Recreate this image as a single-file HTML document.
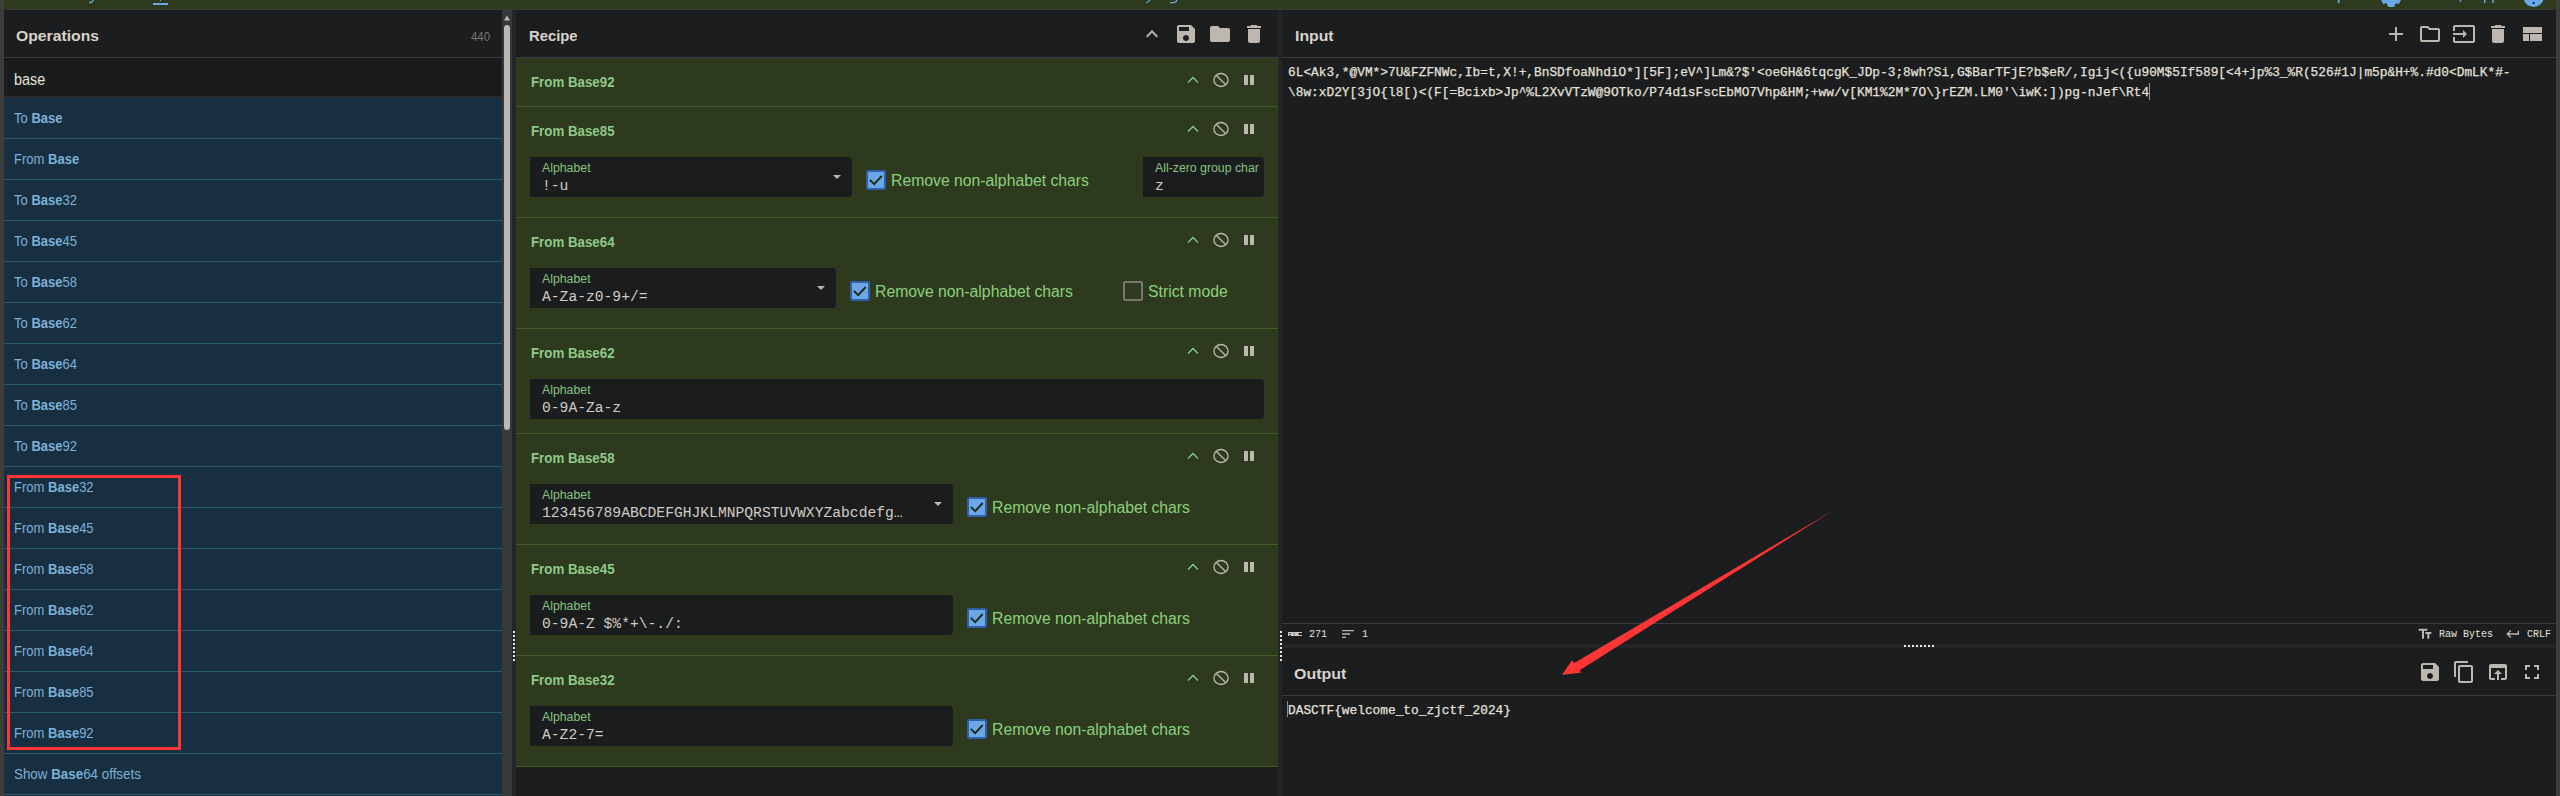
<!DOCTYPE html>
<html><head><meta charset="utf-8"><style>
html,body{margin:0;padding:0;width:2560px;height:796px;overflow:hidden;background:#1c1d1f;}
body>div{position:absolute;}
.t{white-space:pre;}
b{font-weight:bold;}
</style></head><body>
<div style="left:0px;top:0px;width:2560px;height:796px;background:#1c1d1f;"></div>
<div style="left:0px;top:0px;width:2560px;height:9px;background:#2e3a1d;"></div>
<div style="left:0px;top:9px;width:2560px;height:1px;background:#3a3d40;"></div>
<div style="left:0px;top:0px;width:4px;height:796px;background:#3d3d3d;"></div>
<div style="left:2556px;top:0px;width:4px;height:796px;background:#3d3d3d;"></div>
<div style="left:4px;top:10px;width:498px;height:47px;background:#1c1d1f;"></div>
<div style="left:4px;top:57px;width:498px;height:1px;background:#3a3d40;"></div>
<div style="left:4px;top:58px;width:498px;height:38px;background:#1a1b1d;"></div>
<div style="left:4px;top:96px;width:498px;height:2px;background:#26282a;"></div>
<div class="t" style="left:16px;top:28.13px;font-size:15.2px;line-height:15.2px;color:#d8d2ca;font-weight:bold;font-family:'Liberation Sans', sans-serif;transform:scaleX(1.035);transform-origin:0 0;">Operations</div>
<div class="t" style="left:471px;top:30.84px;font-size:12px;line-height:12px;color:#7a756e;font-weight:normal;font-family:'Liberation Sans', sans-serif;transform:scaleX(0.95);transform-origin:0 0;">440</div>
<div class="t" style="left:14px;top:72.46px;font-size:16px;line-height:16px;color:#e4e0da;font-weight:normal;font-family:'Liberation Sans', sans-serif;transform:scaleX(0.9);transform-origin:0 0;">base</div>
<div style="left:4px;top:98px;width:498px;height:698px;background:#182e41;"></div>
<div style="left:4px;top:138px;width:498px;height:1px;background:#2a5866;"></div>
<div class="t" style="left:14px;top:111.15px;font-size:14px;line-height:14px;color:#7cb1d8;font-weight:normal;font-family:'Liberation Sans', sans-serif;transform:scaleX(0.93);transform-origin:0 0;">To <b>Base</b></div>
<div style="left:4px;top:179px;width:498px;height:1px;background:#2a5866;"></div>
<div class="t" style="left:14px;top:152.15px;font-size:14px;line-height:14px;color:#7cb1d8;font-weight:normal;font-family:'Liberation Sans', sans-serif;transform:scaleX(0.93);transform-origin:0 0;">From <b>Base</b></div>
<div style="left:4px;top:220px;width:498px;height:1px;background:#2a5866;"></div>
<div class="t" style="left:14px;top:193.15px;font-size:14px;line-height:14px;color:#7cb1d8;font-weight:normal;font-family:'Liberation Sans', sans-serif;transform:scaleX(0.93);transform-origin:0 0;">To <b>Base</b>32</div>
<div style="left:4px;top:261px;width:498px;height:1px;background:#2a5866;"></div>
<div class="t" style="left:14px;top:234.15px;font-size:14px;line-height:14px;color:#7cb1d8;font-weight:normal;font-family:'Liberation Sans', sans-serif;transform:scaleX(0.93);transform-origin:0 0;">To <b>Base</b>45</div>
<div style="left:4px;top:302px;width:498px;height:1px;background:#2a5866;"></div>
<div class="t" style="left:14px;top:275.15px;font-size:14px;line-height:14px;color:#7cb1d8;font-weight:normal;font-family:'Liberation Sans', sans-serif;transform:scaleX(0.93);transform-origin:0 0;">To <b>Base</b>58</div>
<div style="left:4px;top:343px;width:498px;height:1px;background:#2a5866;"></div>
<div class="t" style="left:14px;top:316.15px;font-size:14px;line-height:14px;color:#7cb1d8;font-weight:normal;font-family:'Liberation Sans', sans-serif;transform:scaleX(0.93);transform-origin:0 0;">To <b>Base</b>62</div>
<div style="left:4px;top:384px;width:498px;height:1px;background:#2a5866;"></div>
<div class="t" style="left:14px;top:357.15px;font-size:14px;line-height:14px;color:#7cb1d8;font-weight:normal;font-family:'Liberation Sans', sans-serif;transform:scaleX(0.93);transform-origin:0 0;">To <b>Base</b>64</div>
<div style="left:4px;top:425px;width:498px;height:1px;background:#2a5866;"></div>
<div class="t" style="left:14px;top:398.15px;font-size:14px;line-height:14px;color:#7cb1d8;font-weight:normal;font-family:'Liberation Sans', sans-serif;transform:scaleX(0.93);transform-origin:0 0;">To <b>Base</b>85</div>
<div style="left:4px;top:466px;width:498px;height:1px;background:#2a5866;"></div>
<div class="t" style="left:14px;top:439.15px;font-size:14px;line-height:14px;color:#7cb1d8;font-weight:normal;font-family:'Liberation Sans', sans-serif;transform:scaleX(0.93);transform-origin:0 0;">To <b>Base</b>92</div>
<div style="left:4px;top:507px;width:498px;height:1px;background:#2a5866;"></div>
<div class="t" style="left:14px;top:480.15px;font-size:14px;line-height:14px;color:#7cb1d8;font-weight:normal;font-family:'Liberation Sans', sans-serif;transform:scaleX(0.93);transform-origin:0 0;">From <b>Base</b>32</div>
<div style="left:4px;top:548px;width:498px;height:1px;background:#2a5866;"></div>
<div class="t" style="left:14px;top:521.15px;font-size:14px;line-height:14px;color:#7cb1d8;font-weight:normal;font-family:'Liberation Sans', sans-serif;transform:scaleX(0.93);transform-origin:0 0;">From <b>Base</b>45</div>
<div style="left:4px;top:589px;width:498px;height:1px;background:#2a5866;"></div>
<div class="t" style="left:14px;top:562.15px;font-size:14px;line-height:14px;color:#7cb1d8;font-weight:normal;font-family:'Liberation Sans', sans-serif;transform:scaleX(0.93);transform-origin:0 0;">From <b>Base</b>58</div>
<div style="left:4px;top:630px;width:498px;height:1px;background:#2a5866;"></div>
<div class="t" style="left:14px;top:603.15px;font-size:14px;line-height:14px;color:#7cb1d8;font-weight:normal;font-family:'Liberation Sans', sans-serif;transform:scaleX(0.93);transform-origin:0 0;">From <b>Base</b>62</div>
<div style="left:4px;top:671px;width:498px;height:1px;background:#2a5866;"></div>
<div class="t" style="left:14px;top:644.15px;font-size:14px;line-height:14px;color:#7cb1d8;font-weight:normal;font-family:'Liberation Sans', sans-serif;transform:scaleX(0.93);transform-origin:0 0;">From <b>Base</b>64</div>
<div style="left:4px;top:712px;width:498px;height:1px;background:#2a5866;"></div>
<div class="t" style="left:14px;top:685.15px;font-size:14px;line-height:14px;color:#7cb1d8;font-weight:normal;font-family:'Liberation Sans', sans-serif;transform:scaleX(0.93);transform-origin:0 0;">From <b>Base</b>85</div>
<div style="left:4px;top:753px;width:498px;height:1px;background:#2a5866;"></div>
<div class="t" style="left:14px;top:726.15px;font-size:14px;line-height:14px;color:#7cb1d8;font-weight:normal;font-family:'Liberation Sans', sans-serif;transform:scaleX(0.93);transform-origin:0 0;">From <b>Base</b>92</div>
<div style="left:4px;top:794px;width:498px;height:1px;background:#2a5866;"></div>
<div class="t" style="left:14px;top:767.15px;font-size:14px;line-height:14px;color:#7cb1d8;font-weight:normal;font-family:'Liberation Sans', sans-serif;transform:scaleX(0.955);transform-origin:0 0;">Show <b>Base</b>64 offsets</div>
<div style="left:502px;top:10px;width:10px;height:786px;background:#36393c;"></div>
<svg style="position:absolute;left:502px;top:10px;" width="10" height="16" viewBox="0 0 10 16"><path fill="#bdb9b2" d="M2 10.5 L5 5.5 L8 10.5 Z"/></svg>
<div style="left:504px;top:25px;width:6px;height:405px;background:#bdb9b2;border-radius:3px"></div>
<div style="left:512px;top:10px;width:4px;height:786px;background:#232527;"></div>
<div style="left:7px;top:475px;width:168px;height:269px;border:3px solid #fd3535"></div>
<div style="left:516px;top:10px;width:762px;height:47px;background:#1c1d1f;"></div>
<div style="left:516px;top:57px;width:762px;height:1px;background:#3a3d40;"></div>
<div class="t" style="left:529px;top:28.13px;font-size:15.2px;line-height:15.2px;color:#d8d2ca;font-weight:bold;font-family:'Liberation Sans', sans-serif;transform:scaleX(0.975);transform-origin:0 0;">Recipe</div>
<svg style="position:absolute;left:1140px;top:21.5px;" width="24" height="24" viewBox="0 0 24 24"><path fill="#bdb7af" d="M7.41 15.41L12 10.83l4.59 4.58L18 14l-6-6-6 6z"/></svg>
<svg style="position:absolute;left:1174px;top:22px;" width="24" height="24" viewBox="0 0 24 24"><path fill="#bdb7af" d="M17 3H5c-1.11 0-2 .9-2 2v14c0 1.1.89 2 2 2h14c1.1 0 2-.9 2-2V7l-4-4zm-5 16c-1.66 0-3-1.34-3-3s1.34-3 3-3 3 1.34 3 3-1.34 3-3 3zm3-10H5V5h10v4z"/></svg>
<svg style="position:absolute;left:1208px;top:22px;" width="24" height="24" viewBox="0 0 24 24"><path fill="#bdb7af" d="M10 4H4c-1.1 0-1.99.9-1.99 2L2 18c0 1.1.9 2 2 2h16c1.1 0 2-.9 2-2V8c0-1.1-.9-2-2-2h-8l-2-2z"/></svg>
<svg style="position:absolute;left:1242px;top:22px;" width="24" height="24" viewBox="0 0 24 24"><path fill="#bdb7af" d="M6 19c0 1.1.9 2 2 2h8c1.1 0 2-.9 2-2V7H6v12zM19 4h-3.5l-1-1h-5l-1 1H5v2h14V4z"/></svg>
<div style="left:1278px;top:10px;width:4px;height:786px;background:#232527;"></div>
<div style="left:516px;top:58px;width:762px;height:49px;background:#2e3a1d;"></div>
<div style="left:516px;top:106px;width:762px;height:1px;background:#455b29;"></div>
<svg style="position:absolute;left:1186px;top:74.5px;" width="14" height="10" viewBox="0 0 14 10"><path fill="none" stroke="#86cc90" stroke-width="1.3" d="M2 7.5 L7 2.5 L12 7.5"/></svg>
<svg style="position:absolute;left:1212px;top:71px;" width="18" height="18" viewBox="0 0 18 18"><ellipse cx="9" cy="9" rx="7.1" ry="6.5" fill="none" stroke="#bdb7af" stroke-width="1.3"/><path d="M4.2 4.2 L13.8 13.8" stroke="#bdb7af" stroke-width="1.3"/></svg>
<div style="left:1244px;top:75px;width:4px;height:10px;background:#bdb7af;"></div>
<div style="left:1250px;top:75px;width:4px;height:10px;background:#bdb7af;"></div>
<div style="left:516px;top:107px;width:762px;height:111px;background:#2e3a1d;"></div>
<div style="left:516px;top:217px;width:762px;height:1px;background:#455b29;"></div>
<svg style="position:absolute;left:1186px;top:123.5px;" width="14" height="10" viewBox="0 0 14 10"><path fill="none" stroke="#86cc90" stroke-width="1.3" d="M2 7.5 L7 2.5 L12 7.5"/></svg>
<svg style="position:absolute;left:1212px;top:120px;" width="18" height="18" viewBox="0 0 18 18"><ellipse cx="9" cy="9" rx="7.1" ry="6.5" fill="none" stroke="#bdb7af" stroke-width="1.3"/><path d="M4.2 4.2 L13.8 13.8" stroke="#bdb7af" stroke-width="1.3"/></svg>
<div style="left:1244px;top:124px;width:4px;height:10px;background:#bdb7af;"></div>
<div style="left:1250px;top:124px;width:4px;height:10px;background:#bdb7af;"></div>
<div style="left:516px;top:218px;width:762px;height:111px;background:#2e3a1d;"></div>
<div style="left:516px;top:328px;width:762px;height:1px;background:#455b29;"></div>
<svg style="position:absolute;left:1186px;top:234.5px;" width="14" height="10" viewBox="0 0 14 10"><path fill="none" stroke="#86cc90" stroke-width="1.3" d="M2 7.5 L7 2.5 L12 7.5"/></svg>
<svg style="position:absolute;left:1212px;top:231px;" width="18" height="18" viewBox="0 0 18 18"><ellipse cx="9" cy="9" rx="7.1" ry="6.5" fill="none" stroke="#bdb7af" stroke-width="1.3"/><path d="M4.2 4.2 L13.8 13.8" stroke="#bdb7af" stroke-width="1.3"/></svg>
<div style="left:1244px;top:235px;width:4px;height:10px;background:#bdb7af;"></div>
<div style="left:1250px;top:235px;width:4px;height:10px;background:#bdb7af;"></div>
<div style="left:516px;top:329px;width:762px;height:105px;background:#2e3a1d;"></div>
<div style="left:516px;top:433px;width:762px;height:1px;background:#455b29;"></div>
<svg style="position:absolute;left:1186px;top:345.5px;" width="14" height="10" viewBox="0 0 14 10"><path fill="none" stroke="#86cc90" stroke-width="1.3" d="M2 7.5 L7 2.5 L12 7.5"/></svg>
<svg style="position:absolute;left:1212px;top:342px;" width="18" height="18" viewBox="0 0 18 18"><ellipse cx="9" cy="9" rx="7.1" ry="6.5" fill="none" stroke="#bdb7af" stroke-width="1.3"/><path d="M4.2 4.2 L13.8 13.8" stroke="#bdb7af" stroke-width="1.3"/></svg>
<div style="left:1244px;top:346px;width:4px;height:10px;background:#bdb7af;"></div>
<div style="left:1250px;top:346px;width:4px;height:10px;background:#bdb7af;"></div>
<div style="left:516px;top:434px;width:762px;height:111px;background:#2e3a1d;"></div>
<div style="left:516px;top:544px;width:762px;height:1px;background:#455b29;"></div>
<svg style="position:absolute;left:1186px;top:450.5px;" width="14" height="10" viewBox="0 0 14 10"><path fill="none" stroke="#86cc90" stroke-width="1.3" d="M2 7.5 L7 2.5 L12 7.5"/></svg>
<svg style="position:absolute;left:1212px;top:447px;" width="18" height="18" viewBox="0 0 18 18"><ellipse cx="9" cy="9" rx="7.1" ry="6.5" fill="none" stroke="#bdb7af" stroke-width="1.3"/><path d="M4.2 4.2 L13.8 13.8" stroke="#bdb7af" stroke-width="1.3"/></svg>
<div style="left:1244px;top:451px;width:4px;height:10px;background:#bdb7af;"></div>
<div style="left:1250px;top:451px;width:4px;height:10px;background:#bdb7af;"></div>
<div style="left:516px;top:545px;width:762px;height:111px;background:#2e3a1d;"></div>
<div style="left:516px;top:655px;width:762px;height:1px;background:#455b29;"></div>
<svg style="position:absolute;left:1186px;top:561.5px;" width="14" height="10" viewBox="0 0 14 10"><path fill="none" stroke="#86cc90" stroke-width="1.3" d="M2 7.5 L7 2.5 L12 7.5"/></svg>
<svg style="position:absolute;left:1212px;top:558px;" width="18" height="18" viewBox="0 0 18 18"><ellipse cx="9" cy="9" rx="7.1" ry="6.5" fill="none" stroke="#bdb7af" stroke-width="1.3"/><path d="M4.2 4.2 L13.8 13.8" stroke="#bdb7af" stroke-width="1.3"/></svg>
<div style="left:1244px;top:562px;width:4px;height:10px;background:#bdb7af;"></div>
<div style="left:1250px;top:562px;width:4px;height:10px;background:#bdb7af;"></div>
<div style="left:516px;top:656px;width:762px;height:111px;background:#2e3a1d;"></div>
<div style="left:516px;top:766px;width:762px;height:1px;background:#455b29;"></div>
<svg style="position:absolute;left:1186px;top:672.5px;" width="14" height="10" viewBox="0 0 14 10"><path fill="none" stroke="#86cc90" stroke-width="1.3" d="M2 7.5 L7 2.5 L12 7.5"/></svg>
<svg style="position:absolute;left:1212px;top:669px;" width="18" height="18" viewBox="0 0 18 18"><ellipse cx="9" cy="9" rx="7.1" ry="6.5" fill="none" stroke="#bdb7af" stroke-width="1.3"/><path d="M4.2 4.2 L13.8 13.8" stroke="#bdb7af" stroke-width="1.3"/></svg>
<div style="left:1244px;top:673px;width:4px;height:10px;background:#bdb7af;"></div>
<div style="left:1250px;top:673px;width:4px;height:10px;background:#bdb7af;"></div>
<div class="t" style="left:531px;top:75.15px;font-size:14px;line-height:14px;color:#8fc98a;font-weight:bold;font-family:'Liberation Sans', sans-serif;transform:scaleX(0.95);transform-origin:0 0;">From Base92</div>
<div class="t" style="left:531px;top:124.15px;font-size:14px;line-height:14px;color:#8fc98a;font-weight:bold;font-family:'Liberation Sans', sans-serif;transform:scaleX(0.95);transform-origin:0 0;">From Base85</div>
<div class="t" style="left:531px;top:235.15px;font-size:14px;line-height:14px;color:#8fc98a;font-weight:bold;font-family:'Liberation Sans', sans-serif;transform:scaleX(0.95);transform-origin:0 0;">From Base64</div>
<div class="t" style="left:531px;top:346.15px;font-size:14px;line-height:14px;color:#8fc98a;font-weight:bold;font-family:'Liberation Sans', sans-serif;transform:scaleX(0.95);transform-origin:0 0;">From Base62</div>
<div class="t" style="left:531px;top:451.15px;font-size:14px;line-height:14px;color:#8fc98a;font-weight:bold;font-family:'Liberation Sans', sans-serif;transform:scaleX(0.95);transform-origin:0 0;">From Base58</div>
<div class="t" style="left:531px;top:562.15px;font-size:14px;line-height:14px;color:#8fc98a;font-weight:bold;font-family:'Liberation Sans', sans-serif;transform:scaleX(0.95);transform-origin:0 0;">From Base45</div>
<div class="t" style="left:531px;top:673.15px;font-size:14px;line-height:14px;color:#8fc98a;font-weight:bold;font-family:'Liberation Sans', sans-serif;transform:scaleX(0.95);transform-origin:0 0;">From Base32</div>
<div style="left:530px;top:157px;width:322px;height:40px;background:#1b1c1e;border-radius:0 4px 4px 0"></div>
<div class="t" style="left:542px;top:161.59px;font-size:12.3px;line-height:12.3px;color:#86c47e;font-weight:normal;font-family:'Liberation Sans', sans-serif;">Alphabet</div>
<div class="t" style="left:542px;top:178.76px;font-size:14.67px;line-height:14.67px;color:#d2ccc4;font-weight:normal;font-family:'Liberation Mono', monospace;">!-u</div>
<svg style="position:absolute;left:832px;top:174px;" width="10" height="6" viewBox="0 0 10 6"><path fill="#bdb7af" d="M1 1 L9 1 L5 5 Z"/></svg>
<div style="left:866px;top:170px;width:20px;height:20px;background:#6ba6e6;box-sizing:border-box;border:2px solid #2f5fa8;border-radius:2px"></div>
<svg style="position:absolute;left:866px;top:170px;" width="20" height="20" viewBox="0 0 20 20"><path fill="none" stroke="#1f2a14" stroke-width="1.9" d="M3.8 9.9 L8.2 14.2 L15.7 6"/></svg>
<div class="t" style="left:891px;top:173.16px;font-size:16px;line-height:16px;color:#8bd07e;font-weight:normal;font-family:'Liberation Sans', sans-serif;transform:scaleX(0.985);transform-origin:0 0;">Remove non-alphabet chars</div>
<div style="left:1143px;top:157px;width:121px;height:40px;background:#1b1c1e;border-radius:0 4px 4px 0"></div>
<div class="t" style="left:1155px;top:161.59px;font-size:12.3px;line-height:12.3px;color:#86c47e;font-weight:normal;font-family:'Liberation Sans', sans-serif;">All-zero group char</div>
<div class="t" style="left:1155px;top:178.76px;font-size:14.67px;line-height:14.67px;color:#d2ccc4;font-weight:normal;font-family:'Liberation Mono', monospace;">z</div>
<div style="left:530px;top:268px;width:306px;height:40px;background:#1b1c1e;border-radius:0 4px 4px 0"></div>
<div class="t" style="left:542px;top:272.59px;font-size:12.3px;line-height:12.3px;color:#86c47e;font-weight:normal;font-family:'Liberation Sans', sans-serif;">Alphabet</div>
<div class="t" style="left:542px;top:289.76px;font-size:14.67px;line-height:14.67px;color:#d2ccc4;font-weight:normal;font-family:'Liberation Mono', monospace;">A-Za-z0-9+/=</div>
<svg style="position:absolute;left:816px;top:285px;" width="10" height="6" viewBox="0 0 10 6"><path fill="#bdb7af" d="M1 1 L9 1 L5 5 Z"/></svg>
<div style="left:850px;top:281px;width:20px;height:20px;background:#6ba6e6;box-sizing:border-box;border:2px solid #2f5fa8;border-radius:2px"></div>
<svg style="position:absolute;left:850px;top:281px;" width="20" height="20" viewBox="0 0 20 20"><path fill="none" stroke="#1f2a14" stroke-width="1.9" d="M3.8 9.9 L8.2 14.2 L15.7 6"/></svg>
<div class="t" style="left:875px;top:284.16px;font-size:16px;line-height:16px;color:#8bd07e;font-weight:normal;font-family:'Liberation Sans', sans-serif;transform:scaleX(0.985);transform-origin:0 0;">Remove non-alphabet chars</div>
<div style="left:1123px;top:281px;width:20px;height:20px;background:transparent;box-sizing:border-box;border:2px solid #7a756d;border-radius:2px"></div>
<div class="t" style="left:1148px;top:284.16px;font-size:16px;line-height:16px;color:#8bd07e;font-weight:normal;font-family:'Liberation Sans', sans-serif;transform:scaleX(0.985);transform-origin:0 0;">Strict mode</div>
<div style="left:530px;top:379px;width:734px;height:40px;background:#1b1c1e;border-radius:0 4px 4px 0"></div>
<div class="t" style="left:542px;top:383.59px;font-size:12.3px;line-height:12.3px;color:#86c47e;font-weight:normal;font-family:'Liberation Sans', sans-serif;">Alphabet</div>
<div class="t" style="left:542px;top:400.76px;font-size:14.67px;line-height:14.67px;color:#d2ccc4;font-weight:normal;font-family:'Liberation Mono', monospace;">0-9A-Za-z</div>
<div style="left:530px;top:484px;width:423px;height:40px;background:#1b1c1e;border-radius:0 4px 4px 0"></div>
<div class="t" style="left:542px;top:488.59px;font-size:12.3px;line-height:12.3px;color:#86c47e;font-weight:normal;font-family:'Liberation Sans', sans-serif;">Alphabet</div>
<div class="t" style="left:542px;top:505.76px;font-size:14.67px;line-height:14.67px;color:#d2ccc4;font-weight:normal;font-family:'Liberation Mono', monospace;">123456789ABCDEFGHJKLMNPQRSTUVWXYZabcdefg…</div>
<svg style="position:absolute;left:933px;top:501px;" width="10" height="6" viewBox="0 0 10 6"><path fill="#bdb7af" d="M1 1 L9 1 L5 5 Z"/></svg>
<div style="left:967px;top:497px;width:20px;height:20px;background:#6ba6e6;box-sizing:border-box;border:2px solid #2f5fa8;border-radius:2px"></div>
<svg style="position:absolute;left:967px;top:497px;" width="20" height="20" viewBox="0 0 20 20"><path fill="none" stroke="#1f2a14" stroke-width="1.9" d="M3.8 9.9 L8.2 14.2 L15.7 6"/></svg>
<div class="t" style="left:992px;top:500.16px;font-size:16px;line-height:16px;color:#8bd07e;font-weight:normal;font-family:'Liberation Sans', sans-serif;transform:scaleX(0.985);transform-origin:0 0;">Remove non-alphabet chars</div>
<div style="left:530px;top:595px;width:423px;height:40px;background:#1b1c1e;border-radius:0 4px 4px 0"></div>
<div class="t" style="left:542px;top:599.59px;font-size:12.3px;line-height:12.3px;color:#86c47e;font-weight:normal;font-family:'Liberation Sans', sans-serif;">Alphabet</div>
<div class="t" style="left:542px;top:616.76px;font-size:14.67px;line-height:14.67px;color:#d2ccc4;font-weight:normal;font-family:'Liberation Mono', monospace;">0-9A-Z $%*+\-./:</div>
<div style="left:967px;top:608px;width:20px;height:20px;background:#6ba6e6;box-sizing:border-box;border:2px solid #2f5fa8;border-radius:2px"></div>
<svg style="position:absolute;left:967px;top:608px;" width="20" height="20" viewBox="0 0 20 20"><path fill="none" stroke="#1f2a14" stroke-width="1.9" d="M3.8 9.9 L8.2 14.2 L15.7 6"/></svg>
<div class="t" style="left:992px;top:611.16px;font-size:16px;line-height:16px;color:#8bd07e;font-weight:normal;font-family:'Liberation Sans', sans-serif;transform:scaleX(0.985);transform-origin:0 0;">Remove non-alphabet chars</div>
<div style="left:530px;top:706px;width:423px;height:40px;background:#1b1c1e;border-radius:0 4px 4px 0"></div>
<div class="t" style="left:542px;top:710.59px;font-size:12.3px;line-height:12.3px;color:#86c47e;font-weight:normal;font-family:'Liberation Sans', sans-serif;">Alphabet</div>
<div class="t" style="left:542px;top:727.76px;font-size:14.67px;line-height:14.67px;color:#d2ccc4;font-weight:normal;font-family:'Liberation Mono', monospace;">A-Z2-7=</div>
<div style="left:967px;top:719px;width:20px;height:20px;background:#6ba6e6;box-sizing:border-box;border:2px solid #2f5fa8;border-radius:2px"></div>
<svg style="position:absolute;left:967px;top:719px;" width="20" height="20" viewBox="0 0 20 20"><path fill="none" stroke="#1f2a14" stroke-width="1.9" d="M3.8 9.9 L8.2 14.2 L15.7 6"/></svg>
<div class="t" style="left:992px;top:722.16px;font-size:16px;line-height:16px;color:#8bd07e;font-weight:normal;font-family:'Liberation Sans', sans-serif;transform:scaleX(0.985);transform-origin:0 0;">Remove non-alphabet chars</div>
<div style="left:1282px;top:57px;width:1274px;height:1px;background:#3a3d40;"></div>
<div class="t" style="left:1295px;top:28.13px;font-size:15.2px;line-height:15.2px;color:#d8d2ca;font-weight:bold;font-family:'Liberation Sans', sans-serif;transform:scaleX(1.04);transform-origin:0 0;">Input</div>
<svg style="position:absolute;left:2384px;top:22px;" width="24" height="24" viewBox="0 0 24 24"><path fill="#bdb7af" d="M19 13h-6v6h-2v-6H5v-2h6V5h2v6h6v2z"/></svg>
<svg style="position:absolute;left:2418px;top:22px;" width="24" height="24" viewBox="0 0 24 24"><path fill="#bdb7af" d="M9.17 6l2 2H20v10H4V6h5.17M10 4H4c-1.1 0-1.99.9-1.99 2L2 18c0 1.1.9 2 2 2h16c1.1 0 2-.9 2-2V8c0-1.1-.9-2-2-2h-8l-2-2z"/></svg>
<svg style="position:absolute;left:2452px;top:22px;" width="24" height="24" viewBox="0 0 24 24"><path fill="#bdb7af" d="M21 3.01H3c-1.1 0-2 .9-2 2V9h2V4.99h18v14.03H3V15H1v4.01c0 1.1.9 1.98 2 1.98h18c1.1 0 2-.88 2-1.98v-14c0-1.11-.9-2-2-2zM11 16l4-4-4-4v3H1v2h10v3z"/></svg>
<svg style="position:absolute;left:2486px;top:22px;" width="24" height="24" viewBox="0 0 24 24"><path fill="#bdb7af" d="M6 19c0 1.1.9 2 2 2h8c1.1 0 2-.9 2-2V7H6v12zM19 4h-3.5l-1-1h-5l-1 1H5v2h14V4z"/></svg>
<svg style="position:absolute;left:2520px;top:22px;" width="24" height="24" viewBox="0 0 24 24"><path fill="#bdb7af" d="M3 19h6v-7H3v7zm7 0h12v-7H10v7zM3 5v6h19V5H3z"/></svg>
<div class="t" style="left:1288px;top:67.17px;font-size:12.82px;line-height:12.82px;color:#e4e0da;font-weight:normal;font-family:'Liberation Mono', monospace;-webkit-text-stroke:0.25px #e4e0da;">6L&lt;Ak3,*@VM*&gt;7U&amp;FZFNWc,Ib=t,X!+,BnSDfoaNhdiO*][5F];eV^]Lm&amp;?$&#x27;&lt;oeGH&amp;6tqcgK_JDp-3;8wh?Si,G$BarTFjE?b$eR/,Igij&lt;({u90M$5If589[&lt;4+jp%3_%R(526#1J|m5p&amp;H+%.#d0&lt;DmLK*#-</div>
<div class="t" style="left:1288px;top:87.17px;font-size:12.82px;line-height:12.82px;color:#e4e0da;font-weight:normal;font-family:'Liberation Mono', monospace;-webkit-text-stroke:0.25px #e4e0da;">\8w:xD2Y[3jO{l8[)&lt;(F[=Bcixb&gt;Jp^%L2XvVTzW@9OTko/P74d1sFscEbMO7Vhp&amp;HM;+ww/v[KM1%2M*7O\}rEZM.LM0&#x27;\iwK:])pg-nJef\Rt4</div>
<div style="left:2149px;top:83px;width:1px;height:17px;background:#9a9a9a;"></div>
<div style="left:1282px;top:623px;width:1274px;height:1px;background:#3a3d40;"></div>
<div style="left:1282px;top:644px;width:1274px;height:4px;background:#232527;"></div>
<div class="t" style="left:1309px;top:630.34px;font-size:10px;line-height:10px;color:#e4e0da;font-weight:normal;font-family:'Liberation Mono', monospace;">271</div>
<div class="t" style="left:1362px;top:630.34px;font-size:10px;line-height:10px;color:#e4e0da;font-weight:normal;font-family:'Liberation Mono', monospace;">1</div>
<div class="t" style="left:2439px;top:630.34px;font-size:10px;line-height:10px;color:#e4e0da;font-weight:normal;font-family:'Liberation Mono', monospace;">Raw Bytes</div>
<div class="t" style="left:2527px;top:630.34px;font-size:10px;line-height:10px;color:#e4e0da;font-weight:normal;font-family:'Liberation Mono', monospace;">CRLF</div>
<svg style="position:absolute;left:1340px;top:626px;" width="16" height="16" viewBox="0 0 24 24"><path fill="#bdb7af" d="M3 18h6v-2H3v2zM3 6v2h18V6H3zm0 7h12v-2H3v2z"/></svg>
<svg style="position:absolute;left:2417px;top:626px;" width="16" height="16" viewBox="0 0 24 24"><path fill="#bdb7af" d="M2.5 4v3h5v12h3V7h5V4h-13zm19 5h-9v3h3v7h3v-7h3V9z"/></svg>
<svg style="position:absolute;left:2505px;top:626px;" width="16" height="16" viewBox="0 0 24 24"><path fill="#bdb7af" d="M19 7v4H5.83l3.58-3.59L8 6l-6 6 6 6 1.41-1.41L5.83 13H21V7z"/></svg>
<svg style="position:absolute;left:1288px;top:632px;" width="14" height="4" viewBox="0 0 14 4"><path fill="#cfc9c1" d="M0 0H14V4H0Z M1.2 0.9H2.8V1.8H1.2Z M1.2 2.9H2.8V4H1.2Z M5.8 1H6.8V1.6H5.8Z M5.8 2.5H6.8V3.1H5.8Z M10.6 1H14V3H10.6Z" fill-rule="evenodd"/></svg>
<div style="left:1282px;top:695px;width:1274px;height:1px;background:#3a3d40;"></div>
<div class="t" style="left:1294px;top:666.13px;font-size:15.2px;line-height:15.2px;color:#d8d2ca;font-weight:bold;font-family:'Liberation Sans', sans-serif;transform:scaleX(1.05);transform-origin:0 0;">Output</div>
<svg style="position:absolute;left:2418px;top:660px;" width="24" height="24" viewBox="0 0 24 24"><path fill="#bdb7af" d="M17 3H5c-1.11 0-2 .9-2 2v14c0 1.1.89 2 2 2h14c1.1 0 2-.9 2-2V7l-4-4zm-5 16c-1.66 0-3-1.34-3-3s1.34-3 3-3 3 1.34 3 3-1.34 3-3 3zm3-10H5V5h10v4z"/></svg>
<svg style="position:absolute;left:2452px;top:660px;" width="24" height="24" viewBox="0 0 24 24"><path fill="#bdb7af" d="M16 1H4c-1.1 0-2 .9-2 2v14h2V3h12V1zm3 4H8c-1.1 0-2 .9-2 2v14c0 1.1.9 2 2 2h11c1.1 0 2-.9 2-2V7c0-1.1-.9-2-2-2zm0 16H8V7h11v14z"/></svg>
<svg style="position:absolute;left:2486px;top:660px;" width="24" height="24" viewBox="0 0 24 24"><path fill="#bdb7af" d="M19 4H5c-1.11 0-2 .9-2 2v12c0 1.1.89 2 2 2h4v-2H5V8h14v10h-4v2h4c1.1 0 2-.9 2-2V6c0-1.1-.89-2-2-2zm-7 6l-4 4h3v6h2v-6h3l-4-4z"/></svg>
<svg style="position:absolute;left:2520px;top:660px;" width="24" height="24" viewBox="0 0 24 24"><path fill="#bdb7af" d="M7 14H5v5h5v-2H7v-3zm-2-4h2V7h3V5H5v5zm12 7h-3v2h5v-5h-2v3zM14 5v2h3v3h2V5h-5z"/></svg>
<div style="left:1287px;top:701px;width:1px;height:16px;background:#8a8a8a;"></div>
<div class="t" style="left:1288px;top:704.67px;font-size:12.82px;line-height:12.82px;color:#e4e0da;font-weight:normal;font-family:'Liberation Mono', monospace;-webkit-text-stroke:0.25px #e4e0da;">DASCTF{welcome_to_zjctf_2024}</div>
<div style="left:1904px;top:645px;width:2px;height:2px;background:#e8e8e8;"></div>
<div style="left:513px;top:631px;width:2px;height:2px;background:#e8e8e8;"></div>
<div style="left:1280px;top:631px;width:2px;height:2px;background:#e8e8e8;"></div>
<div style="left:1908px;top:645px;width:2px;height:2px;background:#e8e8e8;"></div>
<div style="left:513px;top:635px;width:2px;height:2px;background:#e8e8e8;"></div>
<div style="left:1280px;top:635px;width:2px;height:2px;background:#e8e8e8;"></div>
<div style="left:1912px;top:645px;width:2px;height:2px;background:#e8e8e8;"></div>
<div style="left:513px;top:639px;width:2px;height:2px;background:#e8e8e8;"></div>
<div style="left:1280px;top:639px;width:2px;height:2px;background:#e8e8e8;"></div>
<div style="left:1916px;top:645px;width:2px;height:2px;background:#e8e8e8;"></div>
<div style="left:513px;top:643px;width:2px;height:2px;background:#e8e8e8;"></div>
<div style="left:1280px;top:643px;width:2px;height:2px;background:#e8e8e8;"></div>
<div style="left:1920px;top:645px;width:2px;height:2px;background:#e8e8e8;"></div>
<div style="left:513px;top:647px;width:2px;height:2px;background:#e8e8e8;"></div>
<div style="left:1280px;top:647px;width:2px;height:2px;background:#e8e8e8;"></div>
<div style="left:1924px;top:645px;width:2px;height:2px;background:#e8e8e8;"></div>
<div style="left:513px;top:651px;width:2px;height:2px;background:#e8e8e8;"></div>
<div style="left:1280px;top:651px;width:2px;height:2px;background:#e8e8e8;"></div>
<div style="left:1928px;top:645px;width:2px;height:2px;background:#e8e8e8;"></div>
<div style="left:513px;top:655px;width:2px;height:2px;background:#e8e8e8;"></div>
<div style="left:1280px;top:655px;width:2px;height:2px;background:#e8e8e8;"></div>
<div style="left:1932px;top:645px;width:2px;height:2px;background:#e8e8e8;"></div>
<div style="left:513px;top:659px;width:2px;height:2px;background:#e8e8e8;"></div>
<div style="left:1280px;top:659px;width:2px;height:2px;background:#e8e8e8;"></div>
<svg style="position:absolute;left:0px;top:0px;pointer-events:none" width="2560" height="796" viewBox="0 0 2560 796"><polygon fill="#fd3535" points="1834,510 1574.3,662.9 1571.8,660.4 1562,674.7 1581.1,672.7 1579.6,670.2"/></svg>
<div style="left:153px;top:3px;width:15px;height:2px;background:#6aa8ec;"></div>
<div style="left:160px;top:0px;width:1.2px;height:1px;background:#6aa8ec;"></div>
<svg style="position:absolute;left:0px;top:0px;" width="2560" height="10" viewBox="0 0 2560 10">
<path fill="none" stroke="#6aa8ec" stroke-width="1.3" d="M93.5 0 Q92 3 89 2.6"/>
<path fill="none" stroke="#6aa8ec" stroke-width="1.3" d="M1150 0 Q1148.5 2.6 1146 2.6"/>
<path fill="none" stroke="#6aa8ec" stroke-width="1.3" d="M1176.6 0 Q1176.6 2.6 1173 2.6 L1170 2.6"/>
<rect x="2337.8" y="0" width="1.8" height="3" fill="#6aa8ec"/>
<polygon fill="#6aa8ec" points="2381,0 2383.2,3.9 2386.4,3.1 2388.3,6.9 2394.2,6.9 2395,4.2 2396.8,3.2 2398.8,3.9 2401,0"/>
<path fill="none" stroke="#6aa8ec" stroke-width="1.2" d="M2461 0 L2459.6 2"/>
<rect x="2484" y="0" width="1.5" height="3" fill="#6aa8ec"/>
<rect x="2492.3" y="0" width="1.5" height="3" fill="#6aa8ec"/>
<circle cx="2533.6" cy="-3.2" r="10.2" fill="#6aa8ec"/>
<rect x="2532.6" y="2" width="2" height="2" fill="#16213a"/>
</svg>
</body></html>
